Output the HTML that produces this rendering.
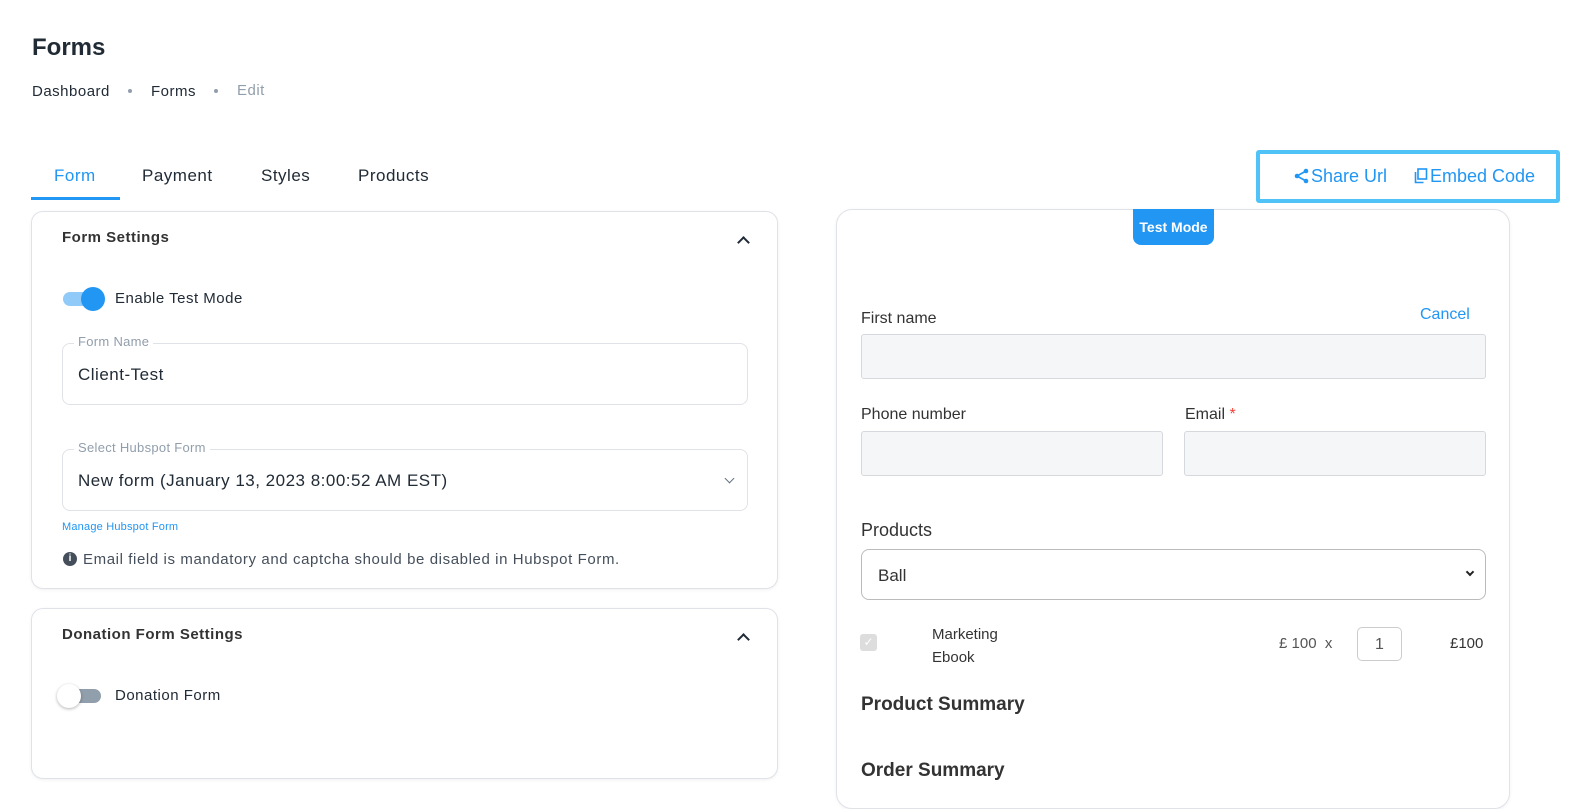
<!DOCTYPE html>
<html><head><meta charset="utf-8"><style>
*{box-sizing:border-box;margin:0;padding:0}
body{width:1570px;height:787px;overflow:hidden;background:#fff;font-family:"Liberation Sans",sans-serif;color:#212b36;position:relative}
.a{position:absolute;white-space:nowrap}
.L{letter-spacing:.5px}
.card{position:absolute;border:1px solid #dfe3e8;border-radius:12px;background:#fff;box-shadow:0 1px 3px rgba(0,0,0,.06)}
.fld{position:absolute;border:1px solid #dfe3e8;border-radius:8px}
.lg{position:absolute;background:#fff;padding:0 4px;font-size:13px;color:#919eab;letter-spacing:.3px}
.inp{position:absolute;background:#f4f6f8;border:1px solid #d5d9de;border-radius:3px}
.chev{position:absolute;width:9px;height:9px;border-left:2px solid #212b36;border-top:2px solid #212b36;transform:rotate(45deg)}
</style></head><body>
<div class="a" style="left:32px;top:34px;font-size:24px;font-weight:bold">Forms</div>
<div class="a L" style="left:32px;top:83px;font-size:15px">Dashboard</div>
<div class="a" style="left:128px;top:89px;width:4px;height:4px;border-radius:2px;background:#919eab"></div>
<div class="a L" style="left:151px;top:83px;font-size:15px">Forms</div>
<div class="a" style="left:214px;top:89px;width:4px;height:4px;border-radius:2px;background:#919eab"></div>
<div class="a L" style="left:237px;top:82px;font-size:15px;color:#919eab">Edit</div>

<div class="a L" style="left:54px;top:166px;font-size:17px;color:#2196f3">Form</div>
<div class="a" style="left:31px;top:197px;width:89px;height:3px;background:#2196f3"></div>
<div class="a L" style="left:142px;top:166px;font-size:17px">Payment</div>
<div class="a L" style="left:261px;top:166px;font-size:17px">Styles</div>
<div class="a L" style="left:358px;top:166px;font-size:17px">Products</div>

<div class="a" style="left:1256px;top:150px;width:304px;height:53px;border:4px solid #4fc3f7;border-radius:3px"></div>
<svg class="a" style="left:1294px;top:168px" width="16" height="16" viewBox="0 0 16 16"><circle cx="3" cy="8" r="2.3" fill="#2196f3"/><circle cx="12" cy="3" r="2.3" fill="#2196f3"/><circle cx="12" cy="13" r="2.3" fill="#2196f3"/><path d="M3 8L12 3M3 8L12 13" stroke="#2196f3" stroke-width="1.6"/></svg>
<div class="a" style="left:1311px;top:166px;font-size:18px;color:#2196f3">Share Url</div>
<svg class="a" style="left:1414px;top:168px" width="14" height="16" viewBox="0 0 14 16"><rect x="4" y="1" width="8.5" height="10" fill="none" stroke="#2196f3" stroke-width="1.6"/><path d="M1.5 4v10.5h8" fill="none" stroke="#2196f3" stroke-width="1.6"/></svg>
<div class="a" style="left:1430px;top:166px;font-size:18px;color:#2196f3">Embed Code</div>

<div class="card" style="left:31px;top:211px;width:747px;height:378px"></div>
<div class="a L" style="left:62px;top:229px;font-size:15px;font-weight:bold;color:#333">Form Settings</div>
<div class="chev" style="left:739px;top:238px"></div>
<div class="a" style="left:63px;top:292px;width:36px;height:14px;border-radius:7px;background:#90caf9"></div>
<div class="a" style="left:81px;top:287px;width:24px;height:24px;border-radius:12px;background:#2196f3"></div>
<div class="a L" style="left:115px;top:290px;font-size:15px">Enable Test Mode</div>
<div class="fld" style="left:62px;top:343px;width:686px;height:62px"></div>
<div class="lg" style="left:74px;top:334px">Form Name</div>
<div class="a L" style="left:78px;top:365px;font-size:17px">Client-Test</div>
<div class="fld" style="left:62px;top:449px;width:686px;height:62px"></div>
<div class="lg" style="left:74px;top:440px">Select Hubspot Form</div>
<div class="a L" style="left:78px;top:471px;font-size:17px">New form (January 13, 2023 8:00:52 AM EST)</div>
<div class="a" style="left:726px;top:475px;width:7px;height:7px;border-right:1.5px solid #637381;border-bottom:1.5px solid #637381;transform:rotate(45deg)"></div>
<div class="a L" style="left:62px;top:521px;font-size:11px;color:#2196f3;letter-spacing:.2px">Manage Hubspot Form</div>
<div class="a" style="left:63px;top:552px;width:14px;height:14px;border-radius:7px;background:#454f5b;color:#fff;font-size:10px;font-weight:bold;text-align:center;line-height:14px">i</div>
<div class="a L" style="left:83px;top:551px;font-size:15px;color:#454f5b;letter-spacing:.6px">Email field is mandatory and captcha should be disabled in Hubspot Form.</div>

<div class="card" style="left:31px;top:608px;width:747px;height:171px"></div>
<div class="a L" style="left:62px;top:626px;font-size:15px;font-weight:bold;color:#333">Donation Form Settings</div>
<div class="chev" style="left:739px;top:635px"></div>
<div class="a" style="left:63px;top:689px;width:38px;height:14px;border-radius:7px;background:#919eab"></div>
<div class="a" style="left:57px;top:684px;width:24px;height:24px;border-radius:12px;background:#fff;box-shadow:0 1px 3px rgba(0,0,0,.3)"></div>
<div class="a L" style="left:115px;top:687px;font-size:15px">Donation Form</div>

<div class="card" style="left:836px;top:209px;width:674px;height:600px;border-radius:16px"></div>
<div class="a" style="left:1133px;top:209px;width:81px;height:36px;background:#2196f3;border-radius:0 0 8px 8px;color:#fff;font-size:14px;font-weight:bold;text-align:center;line-height:36px">Test Mode</div>
<div class="a" style="left:861px;top:310px;font-size:16px;color:#333">First name</div>
<div class="a" style="left:1420px;top:306px;font-size:16px;color:#2196f3">Cancel</div>
<div class="inp" style="left:861px;top:334px;width:625px;height:45px"></div>
<div class="a" style="left:861px;top:406px;font-size:16px;color:#333">Phone number</div>
<div class="a" style="left:1185px;top:406px;font-size:16px;color:#333">Email <span style="color:#f44336">*</span></div>
<div class="inp" style="left:861px;top:431px;width:302px;height:45px"></div>
<div class="inp" style="left:1184px;top:431px;width:302px;height:45px"></div>
<div class="a" style="left:861px;top:520px;font-size:18px;color:#333">Products</div>
<div class="a" style="left:861px;top:549px;width:625px;height:51px;border:1px solid #bbb;border-radius:8px"></div>
<div class="a" style="left:878px;top:566px;font-size:17px;color:#333">Ball</div>
<div class="a" style="left:1467px;top:569px;width:6px;height:6px;border-right:2px solid #222;border-bottom:2px solid #222;transform:rotate(45deg)"></div>
<div class="a" style="left:860px;top:634px;width:17px;height:17px;border-radius:3px;background:#ddd;color:#fff;font-size:12px;text-align:center;line-height:17px">✓</div>
<div class="a" style="left:932px;top:623px;font-size:15px;color:#333;line-height:23px">Marketing<br>Ebook</div>
<div class="a" style="left:1279px;top:635px;font-size:15px;color:#555">£ 100 &nbsp;x</div>
<div class="a" style="left:1357px;top:627px;width:45px;height:34px;border:1px solid #ccc;border-radius:5px;font-size:16px;text-align:center;line-height:34px;color:#555">1</div>
<div class="a" style="left:1450px;top:635px;font-size:15px;color:#333">£100</div>
<div class="a" style="left:861px;top:694px;font-size:19px;font-weight:bold;color:#333">Product Summary</div>
<div class="a" style="left:861px;top:760px;font-size:19px;font-weight:bold;color:#333">Order Summary</div>
</body></html>
